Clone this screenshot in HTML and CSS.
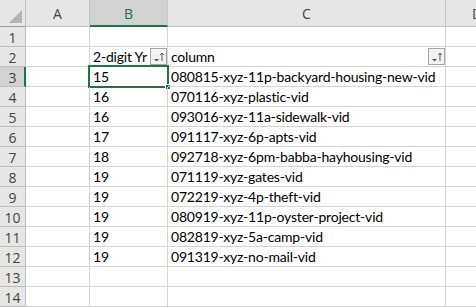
FILE: index.html
```html
<!DOCTYPE html>
<html>
<head>
<meta charset="utf-8">
<link rel="stylesheet" href="styles.css">
</head>
<body>
<div class="sheet">
  <div class="hd corner"><span class="tri"></span></div>
  <div class="hd col">A</div>
  <div class="hd col sel-col">B</div>
  <div class="hd col">C</div>
  <div class="hd col dcol">D</div>

  <div class="hd rn">1</div><div class="c"></div><div class="c"></div><div class="c"></div><div class="c"></div>

  <div class="hd rn">2</div><div class="c"></div>
  <div class="c filt">2-digit Yr<span class="fbtn"><svg width="15" height="14" viewBox="0 0 15 14"><path d="M3 9h5l-2.5 2.5z" fill="#555"/><path d="M11 3v8M9.2 4.8L11 3l1.8 1.8" stroke="#555" stroke-width="1" fill="none"/></svg></span></div>
  <div class="c filt">column<span class="fbtn"><svg width="15" height="14" viewBox="0 0 15 14"><path d="M3 9h5l-2.5 2.5z" fill="#555"/><path d="M11 3v8M9.2 4.8L11 3l1.8 1.8" stroke="#555" stroke-width="1" fill="none"/></svg></span></div>
  <div class="c"></div>

  <div class="hd rn sel-row">3</div><div class="c"></div><div class="c active">15<span class="selbox"><span class="handle"></span></span></div><div class="c">080815-xyz-11p-backyard-housing-new-vid</div><div class="c"></div>
  <div class="hd rn">4</div><div class="c"></div><div class="c">16</div><div class="c">070116-xyz-plastic-vid</div><div class="c"></div>
  <div class="hd rn">5</div><div class="c"></div><div class="c">16</div><div class="c">093016-xyz-11a-sidewalk-vid</div><div class="c"></div>
  <div class="hd rn">6</div><div class="c"></div><div class="c">17</div><div class="c">091117-xyz-6p-apts-vid</div><div class="c"></div>
  <div class="hd rn">7</div><div class="c"></div><div class="c">18</div><div class="c">092718-xyz-6pm-babba-hayhousing-vid</div><div class="c"></div>
  <div class="hd rn">8</div><div class="c"></div><div class="c">19</div><div class="c">071119-xyz-gates-vid</div><div class="c"></div>
  <div class="hd rn">9</div><div class="c"></div><div class="c">19</div><div class="c">072219-xyz-4p-theft-vid</div><div class="c"></div>
  <div class="hd rn">10</div><div class="c"></div><div class="c">19</div><div class="c">080919-xyz-11p-oyster-project-vid</div><div class="c"></div>
  <div class="hd rn">11</div><div class="c"></div><div class="c">19</div><div class="c">082819-xyz-5a-camp-vid</div><div class="c"></div>
  <div class="hd rn">12</div><div class="c"></div><div class="c">19</div><div class="c">091319-xyz-no-mail-vid</div><div class="c"></div>
  <div class="hd rn">13</div><div class="c"></div><div class="c"></div><div class="c"></div><div class="c"></div>
  <div class="hd rn">14</div><div class="c"></div><div class="c"></div><div class="c"></div><div class="c"></div>
</div>
</body>
</html>
```
FILE: styles.css
```css
* { box-sizing: border-box; }
html, body { margin: 0; padding: 0; background: #fff; overflow: hidden; }
.sheet {
  display: grid;
  grid-template-columns: 26px 64px 78px 278px 40px;
  grid-template-rows: 27px repeat(14, 20px);
  width: 476px;
  height: 308px;
  overflow: hidden;
}
.hd {
  background: #e6e6e6;
  border-right: 1px solid #bfbfbf;
  border-bottom: 1px solid #bfbfbf;
  color: #444;
  font-family: "Open Sans", "Noto Sans", sans-serif;
  font-size: 14px;
  display: flex;
  align-items: center;
  justify-content: center;
}
.col { padding-top: 1px; border-right-color: #c8c8c8; }
.corner { position: relative; border-bottom-color: #9e9e9e; }
.tri {
  position: absolute;
  right: 3px;
  bottom: 3px;
  width: 0; height: 0;
  border-left: 13px solid transparent;
  border-bottom: 13px solid #b4b4b4;
}
.dcol { justify-content: flex-start; padding-left: 26px; border-right: none; }
.sel-col { background: #d2d2d2; color: #217346; border-bottom: 2px solid #217346; }
.rn { padding-top: 1px; }
.sel-row { background: #d2d2d2; color: #444; border-right: 2px solid #217346; padding-left: 1px; }
.c {
  border-right: 1px solid #d4d4d4;
  border-bottom: 1px solid #d4d4d4;
  font-family: "Lato", sans-serif;
  font-size: 14px;
  letter-spacing: -0.2px;
  color: #000;
  padding-left: 3px;
  display: flex;
  align-items: flex-end;
  line-height: 18px;
  white-space: nowrap;
  position: relative;
}
.filt { position: relative; }
.fbtn {
  position: absolute;
  right: 0;
  top: 1px;
  width: 17px;
  height: 17px;
  border: 1px solid #a6a6a6;
  background: #f2f2f2;
  display: flex;
  align-items: center;
  justify-content: center;
}
.selbox {
  position: absolute;
  top: -2px; left: -2px; right: -2px; bottom: -2px;
  border: 2px solid #217346;
  pointer-events: none;
}
.handle {
  position: absolute;
  right: -4px;
  bottom: -4px;
  width: 6px;
  height: 6px;
  background: #217346;
  border: 1px solid #fff;
}
```
